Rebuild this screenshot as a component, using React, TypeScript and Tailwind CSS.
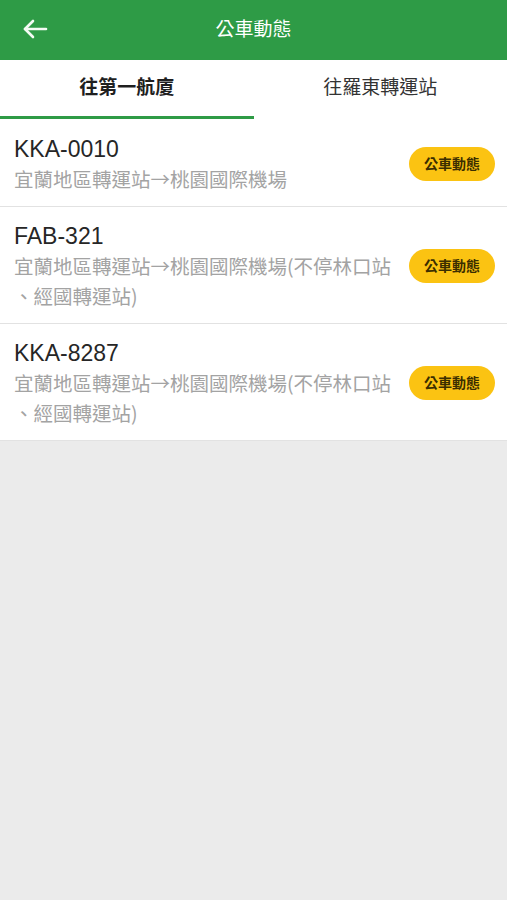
import React from 'react'

interface Bus {
  plate: string
  lines: string[]
}

const buses: Bus[] = [
  { plate: 'KKA-0010', lines: ['宜蘭地區轉運站→桃園國際機場'] },
  { plate: 'FAB-321', lines: ['宜蘭地區轉運站→桃園國際機場(不停林口站', '、經國轉運站)'] },
  { plate: 'KKA-8287', lines: ['宜蘭地區轉運站→桃園國際機場(不停林口站', '、經國轉運站)'] },
]

const BusRow = ({ bus }: { bus: Bus }) => {
  return (
    <div className="flex items-center justify-between bg-white pl-[14px] pr-[12px] pt-[14px] pb-[12px] border-b border-[#e2e2e2]">
      <div className="flex flex-col">
        <div className="text-[23px] leading-[30px] text-[#262626]">{bus.plate}</div>
        <div className="text-[19.5px] leading-[30px] text-[#a3a3a3] font-['Noto_Sans_CJK_TC',sans-serif]">
          {bus.lines.map((l) => (
            <div key={l}>{l}</div>
          ))}
        </div>
      </div>
      <button
        type="button"
        className="w-[86px] h-[34px] rounded-full bg-[#fbc312] text-[14px] font-bold text-[#3b2e00] shrink-0"
      >
        公車動態
      </button>
    </div>
  )
}

const App = () => {
  return (
    <div
      className="min-h-[900px] bg-[#ebebeb] flex flex-col"
      style={{ fontFamily: '"Liberation Sans", "Noto Sans CJK TC", sans-serif' }}
    >
      <div className="relative h-[60px] bg-[#2e9b46] flex items-center justify-center">
        <button type="button" className="absolute left-[22px] top-[18px]">
          <svg width="26" height="22" viewBox="0 0 26 22" fill="none" stroke="#f4fbf4" strokeWidth="2.6" strokeLinecap="round" strokeLinejoin="round">
            <path d="M24 11H3" />
            <path d="M11 3L3 11L11 19" />
          </svg>
        </button>
        <div className="text-white text-[19px]">公車動態</div>
      </div>
      <div className="flex bg-white h-[60px]">
        <div className="w-1/2 flex flex-col">
          <div className="flex-1 flex items-center justify-center text-[19px] font-bold text-[#1f1f1f]">往第一航廈</div>
          <div className="h-[3px] bg-[#2e9b46] mb-[1px]" />
        </div>
        <div className="w-1/2 flex flex-col">
          <div className="flex-1 flex items-center justify-center text-[19px] text-[#333333]">往羅東轉運站</div>
          <div className="h-[4px]" />
        </div>
      </div>
      {buses.map((b) => (
        <BusRow key={b.plate} bus={b} />
      ))}
    </div>
  )
}

export default App
